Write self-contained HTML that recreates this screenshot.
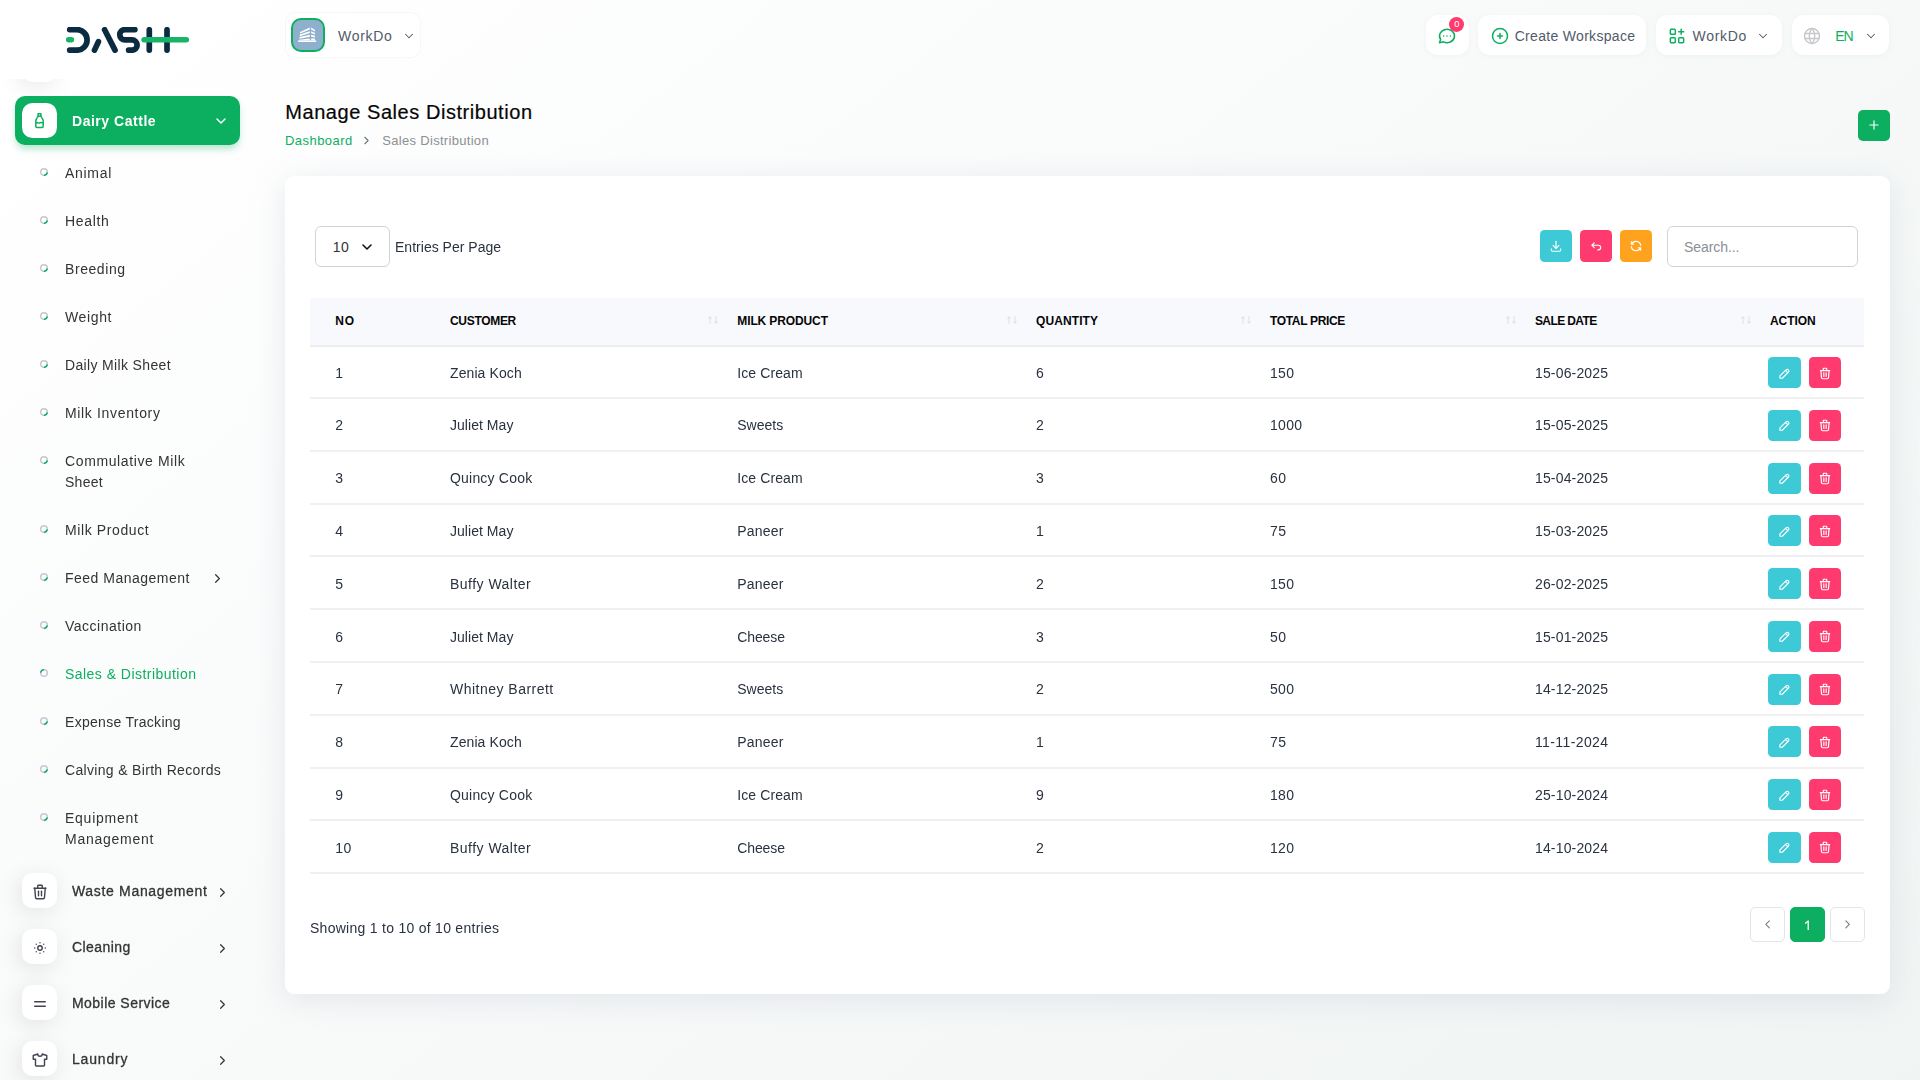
<!DOCTYPE html>
<html lang="en">
<head>
<meta charset="utf-8">
<title>Manage Sales Distribution</title>
<style>
*{box-sizing:border-box;margin:0;padding:0}
html,body{width:1920px;height:1080px;overflow:hidden}
body{font-family:"Liberation Sans",sans-serif;font-size:14px;color:#293240;
background:linear-gradient(141.55deg,rgba(240,244,243,0) 3.46%,#f0f4f3 99.86%),#fff;position:relative}
#side{position:absolute;left:0;top:0;width:280px;height:1080px;will-change:transform}
svg{display:block}
span{white-space:nowrap}
/* sidebar */
.logo{position:absolute;left:66px;top:27px;width:124px;height:26px}
.ghost{position:absolute;left:22px;top:47px;width:35px;height:35px;border-radius:10.5px;background:#fff;box-shadow:-3px 4px 23px rgba(0,0,0,.1);clip-path:inset(32px -60px -60px -60px)}
.act{position:absolute;left:15px;top:96px;width:225px;height:49px;border-radius:10px;background:#0caf60;box-shadow:0 5px 7px -1px rgba(12,175,96,.3)}
.act .ib{position:absolute;left:7px;top:7px;width:35px;height:35px;border-radius:10.5px;background:#fff}
.act .t{position:absolute;left:57px;top:14.8px;line-height:21px;font-size:14px;font-weight:700;color:#fff}
.sub{position:absolute;left:0;top:149.6px;width:280px;list-style:none}
.sub li{position:relative;padding:13.5px 0 13.5px 65px;line-height:21px;font-size:14px;color:#333}
.sub li .b{position:absolute;left:39.1px;top:17.4px;width:10px;height:10px}
.sub li.on{color:#0caf60}
.sub li .chev{position:absolute;left:209.5px;top:16.2px}
.main{position:absolute;left:0;top:862px;width:280px;list-style:none}
.main li{position:relative;height:56px}
.main li .ib{position:absolute;left:22px;top:11px;width:35px;height:35px;border-radius:10.5px;background:#fff;box-shadow:-3px 4px 23px rgba(0,0,0,.1)}
.main li .ib svg{position:absolute;left:8.6px;top:10.1px}
.main li .t{position:absolute;left:72px;top:19px;line-height:21px;font-size:14px;color:#333;-webkit-text-stroke:.3px #333}
.main li .chev{position:absolute;left:214.5px;top:22.8px}
/* header */
.pill{position:absolute;top:15px;height:40px;border-radius:12px;background:#fff;box-shadow:0 1px 5px rgba(200,205,210,.18)}
.pill .t{position:absolute;top:11.1px;line-height:21px;font-size:14px;color:#525b69}
.ws{position:absolute;left:285px;top:12px;width:136px;height:45.5px;border-radius:10px;background:rgba(255,255,255,.9);border:1px solid rgba(226,229,233,.3)}
.ws .av{position:absolute;left:5px;top:4.9px;width:34px;height:34px;border-radius:10px;border:2px solid #0caf60;background:#8fb0cd;overflow:hidden}
.ws .av svg{position:absolute;left:-2px;top:-2px}
.ws .t{position:absolute;left:52px;top:13.3px;line-height:21px;font-size:14px;color:#525b69}
.badge{position:absolute;left:23.4px;top:2px;width:14.8px;height:14.8px;border-radius:50%;background:#ff3a6e;color:#fff;font-size:9.3px;line-height:14.8px;text-align:center}
/* page head */
h1{position:absolute;left:285.3px;top:97.4px;font-size:20px;line-height:30px;font-weight:400;color:#060606;white-space:nowrap;-webkit-text-stroke:.2px #060606}
.bc{position:absolute;left:285px;top:131px;line-height:20px;font-size:13px;white-space:nowrap}
.bc .a{color:#0caf60}
.bc .c{color:#8c8f94}
.add{position:absolute;left:1858px;top:110px;width:32px;height:31px;border-radius:5px;background:#0caf60}
/* card */
.card{position:absolute;left:285px;top:176px;width:1605px;height:817.8px;border-radius:9px;background:#fff;box-shadow:0 6px 30px rgba(182,186,203,.3)}
.sel{position:absolute;left:30.3px;top:50.3px;width:74.4px;height:40.4px;border:1px solid #ced4da;border-radius:6px;background:#fff}
.sel .t{position:absolute;left:16.5px;top:9.4px;line-height:21px;font-size:14px;color:#333}
.epp{position:absolute;left:110px;top:60.7px;line-height:21px;font-size:14px;color:#293240}
.tb{position:absolute;top:54px;width:32px;height:32px;border-radius:4.5px}
.search{position:absolute;left:1382px;top:50.3px;width:191px;height:40.4px;border:1px solid #ced4da;border-radius:6px;background:#fff}
.search .t{position:absolute;left:16px;top:9.9px;line-height:21px;font-size:14px;color:#8a8f96}
table{position:absolute;left:25.3px;top:122px;width:1554.2px;border-collapse:separate;border-spacing:0;table-layout:fixed}
th{height:49px;background:#f8f9fd;border-bottom:2px solid #edeeef;text-align:left;padding:0 0 2px 12px;font-size:12px;font-weight:700;color:#060606;position:relative;white-space:nowrap;vertical-align:middle}
td{height:52.775px;border-bottom:2px solid #f0f0f0;padding:1.8px 0 0 12px;font-size:14px;color:#293240;vertical-align:middle;white-space:nowrap}
th:first-child,td:first-child{padding-left:25px}
tbody tr:first-child td{height:52.175px}
th .so{position:absolute;right:6.9px;top:18.4px}
td.ac{font-size:0;padding-top:10.6px;vertical-align:top}
tbody tr:first-child td.ac{padding-top:10px}
.ab{display:inline-block;vertical-align:top;width:33px;height:31px;border-radius:4.5px;position:relative}
.ab.e{background:#3ec9d6;margin-left:-2px}
.ab.d{background:#ff3a6e;margin-left:8.2px;width:31.6px}
.ab svg{position:absolute;left:50%;top:50%;transform:translate(-50%,calc(-50% + .5px))}
.ab.e svg{transform:translate(calc(-50% + .6px),calc(-50% + .6px))}
.info{position:absolute;left:25px;top:741.8px;line-height:21px;font-size:14px;color:#293240}
.pg{position:absolute;top:731px;width:34.8px;height:34.8px;border-radius:5px;border:1px solid #e4e5e8;background:#fff}
.pg.on{background:#0caf60;border-color:#0caf60;color:#fff;font-size:14px;line-height:33px;text-align:center}
.pg svg{position:absolute;left:50%;top:50%;transform:translate(calc(-50% + .6px),calc(-50% + .4px))}
</style>
</head>
<body>
<div id="side">
<svg class="logo" viewBox="66 27 124 26" fill="none" stroke-linecap="round" stroke-linejoin="round">
<g stroke="#0b2b40" stroke-width="5.7">
<path d="M69.7 29.6H76.8A10.3 10.3 0 0 1 76.8 50.2H69.7"/>
<path d="M94.5 50.1L98.4 41.7"/>
<path d="M104.6 29.7L115 50.1"/>
<path d="M134.9 29.6H124.9A5.15 5.15 0 0 0 124.9 39.9H132A5.15 5.15 0 0 1 132 50.2H128.6"/>
<path d="M149.3 29.7V50.1"/>
<path d="M167 29.7V50.1"/>
</g>
<g stroke="#17b366" stroke-width="5.5">
<path d="M68.6 39.7H71.4"/>
<path d="M144.1 39.7H186.3"/>
</g>
</svg>
<div class="ghost"></div>
<div class="act"><span class="ib"><svg style="position:absolute;left:8.6px;top:9.3px" width="17" height="17" viewBox="0 0 24 24" fill="none" stroke="#0caf60" stroke-width="2.1" stroke-linecap="round" stroke-linejoin="round"><path d="M10 2.5h4v3.5h-4z"/><path d="M10 6l-3.2 5.5v9a1.5 1.5 0 0 0 1.5 1.5h7.4a1.5 1.5 0 0 0 1.5 -1.5v-9l-3.2 -5.5"/><path d="M7 15.5c2 -2.5 3.5 1.5 5 0s3 -1 5 0"/></svg></span><span class="t" style="letter-spacing:0.527px;">Dairy Cattle</span><svg width="16" height="16" viewBox="0 0 24 24" fill="none" stroke="#fff" stroke-width="2.2" stroke-linecap="round" stroke-linejoin="round" style="position:absolute;top:16.5px;left:197.5px"><path d="M6 9l6 6l6 -6"/></svg></div>
<ul class="sub">
<li><svg class="b" viewBox="0 0 10 10"><circle cx="5" cy="5" r="3.3" fill="none" stroke="#c9c7d6" stroke-width="1.5"/><path d="M8.1 6.1A3.3 3.3 0 0 1 5.6 8.25" fill="none" stroke="#0caf60" stroke-width="1.6" stroke-linecap="round"/></svg><span style="letter-spacing:0.691px;">Animal</span></li>
<li><svg class="b" viewBox="0 0 10 10"><circle cx="5" cy="5" r="3.3" fill="none" stroke="#c9c7d6" stroke-width="1.5"/><path d="M8.1 6.1A3.3 3.3 0 0 1 5.6 8.25" fill="none" stroke="#0caf60" stroke-width="1.6" stroke-linecap="round"/></svg><span style="letter-spacing:0.688px;">Health</span></li>
<li><svg class="b" viewBox="0 0 10 10"><circle cx="5" cy="5" r="3.3" fill="none" stroke="#c9c7d6" stroke-width="1.5"/><path d="M8.1 6.1A3.3 3.3 0 0 1 5.6 8.25" fill="none" stroke="#0caf60" stroke-width="1.6" stroke-linecap="round"/></svg><span style="letter-spacing:0.573px;">Breeding</span></li>
<li><svg class="b" viewBox="0 0 10 10"><circle cx="5" cy="5" r="3.3" fill="none" stroke="#c9c7d6" stroke-width="1.5"/><path d="M8.1 6.1A3.3 3.3 0 0 1 5.6 8.25" fill="none" stroke="#0caf60" stroke-width="1.6" stroke-linecap="round"/></svg><span style="letter-spacing:0.631px;">Weight</span></li>
<li><svg class="b" viewBox="0 0 10 10"><circle cx="5" cy="5" r="3.3" fill="none" stroke="#c9c7d6" stroke-width="1.5"/><path d="M8.1 6.1A3.3 3.3 0 0 1 5.6 8.25" fill="none" stroke="#0caf60" stroke-width="1.6" stroke-linecap="round"/></svg><span style="letter-spacing:0.346px;">Daily Milk Sheet</span></li>
<li><svg class="b" viewBox="0 0 10 10"><circle cx="5" cy="5" r="3.3" fill="none" stroke="#c9c7d6" stroke-width="1.5"/><path d="M8.1 6.1A3.3 3.3 0 0 1 5.6 8.25" fill="none" stroke="#0caf60" stroke-width="1.6" stroke-linecap="round"/></svg><span style="letter-spacing:0.656px;">Milk Inventory</span></li>
<li><svg class="b" viewBox="0 0 10 10"><circle cx="5" cy="5" r="3.3" fill="none" stroke="#c9c7d6" stroke-width="1.5"/><path d="M8.1 6.1A3.3 3.3 0 0 1 5.6 8.25" fill="none" stroke="#0caf60" stroke-width="1.6" stroke-linecap="round"/></svg><span style="letter-spacing:0.62px;">Commulative Milk</span><br><span style="letter-spacing:0.27px;">Sheet</span></li>
<li><svg class="b" viewBox="0 0 10 10"><circle cx="5" cy="5" r="3.3" fill="none" stroke="#c9c7d6" stroke-width="1.5"/><path d="M8.1 6.1A3.3 3.3 0 0 1 5.6 8.25" fill="none" stroke="#0caf60" stroke-width="1.6" stroke-linecap="round"/></svg><span style="letter-spacing:0.61px;">Milk Product</span></li>
<li><svg class="b" viewBox="0 0 10 10"><circle cx="5" cy="5" r="3.3" fill="none" stroke="#c9c7d6" stroke-width="1.5"/><path d="M8.1 6.1A3.3 3.3 0 0 1 5.6 8.25" fill="none" stroke="#0caf60" stroke-width="1.6" stroke-linecap="round"/></svg><span style="letter-spacing:0.487px;">Feed Management</span><svg class="chev" width="15" height="15" viewBox="0 0 24 24" fill="none" stroke="#333" stroke-width="1.9" stroke-linecap="round" stroke-linejoin="round" style=""><path d="M9 6l6 6l-6 6"/></svg></li>
<li><svg class="b" viewBox="0 0 10 10"><circle cx="5" cy="5" r="3.3" fill="none" stroke="#c9c7d6" stroke-width="1.5"/><path d="M8.1 6.1A3.3 3.3 0 0 1 5.6 8.25" fill="none" stroke="#0caf60" stroke-width="1.6" stroke-linecap="round"/></svg><span style="letter-spacing:0.506px;">Vaccination</span></li>
<li class="on"><svg class="b" viewBox="0 0 10 10"><circle cx="5" cy="5" r="3.3" fill="none" stroke="#c9c7d6" stroke-width="1.5"/><path d="M1.9 3.9A3.3 3.3 0 0 1 4.4 1.75" fill="none" stroke="#0caf60" stroke-width="1.6" stroke-linecap="round"/></svg><span style="letter-spacing:0.461px;">Sales &amp; Distribution</span></li>
<li><svg class="b" viewBox="0 0 10 10"><circle cx="5" cy="5" r="3.3" fill="none" stroke="#c9c7d6" stroke-width="1.5"/><path d="M8.1 6.1A3.3 3.3 0 0 1 5.6 8.25" fill="none" stroke="#0caf60" stroke-width="1.6" stroke-linecap="round"/></svg><span style="letter-spacing:0.291px;">Expense Tracking</span></li>
<li><svg class="b" viewBox="0 0 10 10"><circle cx="5" cy="5" r="3.3" fill="none" stroke="#c9c7d6" stroke-width="1.5"/><path d="M8.1 6.1A3.3 3.3 0 0 1 5.6 8.25" fill="none" stroke="#0caf60" stroke-width="1.6" stroke-linecap="round"/></svg><span style="letter-spacing:0.324px;">Calving &amp; Birth Records</span></li>
<li><svg class="b" viewBox="0 0 10 10"><circle cx="5" cy="5" r="3.3" fill="none" stroke="#c9c7d6" stroke-width="1.5"/><path d="M8.1 6.1A3.3 3.3 0 0 1 5.6 8.25" fill="none" stroke="#0caf60" stroke-width="1.6" stroke-linecap="round"/></svg><span style="letter-spacing:0.749px;">Equipment</span><br><span style="letter-spacing:0.751px;">Management</span></li>
</ul>
<ul class="main">
<li><span class="ib"><svg width="18" height="18" viewBox="0 0 24 24" fill="none" stroke="#40454f" stroke-width="1.9" stroke-linecap="round" stroke-linejoin="round" style=""><path d="M4 7h16"/><path d="M10 11v6"/><path d="M14 11v6"/><path d="M5 7l1 12a2 2 0 0 0 2 2h8a2 2 0 0 0 2 -2l1 -12"/><path d="M9 7v-3a1 1 0 0 1 1 -1h4a1 1 0 0 1 1 1v3"/></svg></span><span class="t" style="letter-spacing:0.677px;">Waste Management</span><svg class="chev" width="15" height="15" viewBox="0 0 24 24" fill="none" stroke="#333" stroke-width="1.9" stroke-linecap="round" stroke-linejoin="round" style=""><path d="M9 6l6 6l-6 6"/></svg></li>
<li><span class="ib"><svg width="18" height="18" viewBox="0 0 24 24" fill="none" stroke="#40454f" stroke-width="1.9" stroke-linecap="round" stroke-linejoin="round" style=""><circle cx="12" cy="12" r="3"/><path d="M12 5v.01M17 7v.01M19 12v.01M17 17v.01M12 19v.01M7 17v.01M5 12v.01M7 7v.01"/></svg></span><span class="t" style="letter-spacing:0.43px;">Cleaning</span><svg class="chev" width="15" height="15" viewBox="0 0 24 24" fill="none" stroke="#333" stroke-width="1.9" stroke-linecap="round" stroke-linejoin="round" style=""><path d="M9 6l6 6l-6 6"/></svg></li>
<li><span class="ib"><svg width="18" height="18" viewBox="0 0 24 24" fill="none" stroke="#40454f" stroke-width="1.9" stroke-linecap="round" stroke-linejoin="round" style=""><path d="M5 9h14"/><path d="M5 15h14"/></svg></span><span class="t" style="letter-spacing:0.461px;">Mobile Service</span><svg class="chev" width="15" height="15" viewBox="0 0 24 24" fill="none" stroke="#333" stroke-width="1.9" stroke-linecap="round" stroke-linejoin="round" style=""><path d="M9 6l6 6l-6 6"/></svg></li>
<li><span class="ib"><svg width="18" height="18" viewBox="0 0 24 24" fill="none" stroke="#40454f" stroke-width="1.9" stroke-linecap="round" stroke-linejoin="round" style=""><path d="M15 4l6 2v5h-3v8a1 1 0 0 1 -1 1h-10a1 1 0 0 1 -1 -1v-8h-3v-5l6 -2a3 3 0 0 0 6 0"/></svg></span><span class="t" style="letter-spacing:0.808px;">Laundry</span><svg class="chev" width="15" height="15" viewBox="0 0 24 24" fill="none" stroke="#333" stroke-width="1.9" stroke-linecap="round" stroke-linejoin="round" style=""><path d="M9 6l6 6l-6 6"/></svg></li>
</ul>
</div>
<div class="ws"><span class="av"><svg viewBox="0 0 34 34" width="34" height="34"><g fill="#fff"><path d="M9 13.9L18.8 9.5V11.4L9 15.6z"/><path d="M8.8 16.5L18.8 13.2V15.1L8.8 18.2z"/><path d="M8.5 19.1L18.8 16.8V18.7L8.5 20.8z"/><path d="M8.3 21.7L18.8 20.4V22.6H8.3z"/><path d="M20.1 9.5L24 12V13.6L20.1 11.4z"/><path d="M20.1 13.2L24 14.9V16.5L20.1 15.1z"/><path d="M20.1 16.8L24 17.8V19.4L20.1 18.7z"/><path d="M20.1 20.4L24 20.6V22.6H20.1z"/><path d="M7.1 22.4H25.2V24H7.1z"/></g></svg></span><span class="t" style="letter-spacing:0.695px;">WorkDo</span><svg width="14" height="14" viewBox="0 0 24 24" fill="none" stroke="#525b69" stroke-width="1.8" stroke-linecap="round" stroke-linejoin="round" style="position:absolute;left:115.85px;top:15.5px"><path d="M6 9l6 6l6 -6"/></svg></div>
<div class="pill" style="left:1426px;width:42.5px"><svg width="20" height="20" viewBox="0 0 24 24" fill="none" stroke="#0caf60" stroke-width="1.8" stroke-linecap="round" stroke-linejoin="round" style="position:absolute;left:11.25px;top:11.2px"><path d="M3 20l1.3 -3.9a9 8 0 1 1 3.4 2.9l-4.7 1"/><path d="M8 12v.01M12 12v.01M16 12v.01"/></svg><span class="badge">0</span></div>
<div class="pill" style="left:1478px;width:168px"><svg width="20" height="20" viewBox="0 0 24 24" fill="none" stroke="#0caf60" stroke-width="1.8" stroke-linecap="round" stroke-linejoin="round" style="position:absolute;left:11.5px;top:11px"><circle cx="12" cy="12" r="9"/><path d="M9 12h6M12 9v6"/></svg><span class="t" style="letter-spacing:0.31px;left:36.7px">Create Workspace</span></div>
<div class="pill" style="left:1656px;width:125.5px"><svg width="20" height="20" viewBox="0 0 24 24" fill="none" stroke="#0caf60" stroke-width="1.8" stroke-linecap="round" stroke-linejoin="round" style="position:absolute;left:11.2px;top:11px"><rect x="4" y="4" width="6" height="6" rx="1"/><rect x="4" y="14" width="6" height="6" rx="1"/><rect x="14" y="14" width="6" height="6" rx="1"/><path d="M14 7h6M17 4v6"/></svg><span class="t" style="letter-spacing:0.695px;left:36.5px">WorkDo</span><svg width="14" height="14" viewBox="0 0 24 24" fill="none" stroke="#525b69" stroke-width="1.8" stroke-linecap="round" stroke-linejoin="round" style="position:absolute;left:100px;top:13.5px"><path d="M6 9l6 6l6 -6"/></svg></div>
<div class="pill" style="left:1791.5px;width:97.5px"><svg width="20" height="20" viewBox="0 0 24 24" fill="none" stroke="#c6c8cc" stroke-width="1.7" stroke-linecap="round" stroke-linejoin="round" style="position:absolute;left:10.7px;top:10.75px"><circle cx="12" cy="12" r="9"/><path d="M3.6 9h16.8M3.6 15h16.8M11.5 3a17 17 0 0 0 0 18M12.5 3a17 17 0 0 1 0 18"/></svg><span class="t" style="letter-spacing:-1.107px;left:43.8px;color:#0caf60">EN</span><svg width="14" height="14" viewBox="0 0 24 24" fill="none" stroke="#525b69" stroke-width="1.8" stroke-linecap="round" stroke-linejoin="round" style="position:absolute;left:72.35px;top:13.5px"><path d="M6 9l6 6l6 -6"/></svg></div>
<h1><span style="letter-spacing:0.552px;">Manage Sales Distribution</span></h1>
<div class="bc"><span class="a" style="letter-spacing:0.451px;">Dashboard</span><svg width="13" height="13" viewBox="0 0 24 24" fill="none" stroke="#6c757d" stroke-width="2" stroke-linecap="round" stroke-linejoin="round" style="position:absolute;left:75.3px;top:2.5px"><path d="M9 6l6 6l-6 6"/></svg><span class="c" style="letter-spacing:0.304px;position:absolute;left:97.3px">Sales Distribution</span></div>
<div class="add"><svg width="14" height="14" viewBox="0 0 24 24" fill="none" stroke="#fff" stroke-width="2" stroke-linecap="round" stroke-linejoin="round" style="position:absolute;left:9px;top:7.8px"><path d="M12 5v14M5 12h14"/></svg></div>
<div class="card">
<div class="sel"><span class="t" style="letter-spacing:0.438px;">10</span><svg width="16" height="16" viewBox="0 0 24 24" fill="none" stroke="#111" stroke-width="2.4" stroke-linecap="round" stroke-linejoin="round" style="position:absolute;left:43.2px;top:11.4px"><path d="M6 9l6 6l6 -6"/></svg></div>
<div class="epp"><span style="letter-spacing:0.019px;">Entries Per Page</span></div>
<div class="tb" style="left:1255px;background:#3ec9d6"><svg width="14" height="14" viewBox="0 0 24 24" fill="none" stroke="#fff" stroke-width="2" stroke-linecap="round" stroke-linejoin="round" style="position:absolute;left:8.8px;top:9.3px"><path d="M4 17v2a2 2 0 0 0 2 2h12a2 2 0 0 0 2 -2v-2"/><path d="M7 11l5 5l5 -5"/><path d="M12 4v12"/></svg></div>
<div class="tb" style="left:1295px;background:#ff3a6e"><svg width="14" height="14" viewBox="0 0 24 24" fill="none" stroke="#fff" stroke-width="2" stroke-linecap="round" stroke-linejoin="round" style="position:absolute;left:9.1px;top:9.5px"><path d="M9 13l-4 -4l4 -4m-4 4h11a4 4 0 0 1 0 8h-1"/></svg></div>
<div class="tb" style="left:1335px;background:#ffa21d"><svg width="14" height="14" viewBox="0 0 24 24" fill="none" stroke="#fff" stroke-width="2" stroke-linecap="round" stroke-linejoin="round" style="position:absolute;left:8.7px;top:9.25px"><path d="M20 11a8.1 8.1 0 0 0 -15.5 -2m-.5 -4v4h4"/><path d="M4 13a8.1 8.1 0 0 0 15.5 2m.5 4v-4h-4"/></svg></div>
<div class="search"><span class="t" style="letter-spacing:-0.069px;">Search...</span></div>
<table>
<colgroup><col style="width:127.7px"><col style="width:287.3px"><col style="width:298.7px"><col style="width:234px"><col style="width:265px"><col style="width:235px"><col style="width:106.5px"></colgroup>
<thead><tr><th><span style="letter-spacing:0.7px;">NO</span></th><th><span style="letter-spacing:-0.307px;">CUSTOMER</span><svg class="so" width="10" height="8" viewBox="0 0 10 8" fill="none" stroke="#dcdfe4" stroke-width="1" stroke-linecap="round" stroke-linejoin="round"><path d="M2 7.5V1M.6 2.4L2 .8l1.4 1.6M8 .5V7M6.6 5.6L8 7.2l1.4-1.6"/></svg></th><th><span style="letter-spacing:-0.117px;">MILK PRODUCT</span><svg class="so" width="10" height="8" viewBox="0 0 10 8" fill="none" stroke="#dcdfe4" stroke-width="1" stroke-linecap="round" stroke-linejoin="round"><path d="M2 7.5V1M.6 2.4L2 .8l1.4 1.6M8 .5V7M6.6 5.6L8 7.2l1.4-1.6"/></svg></th><th><span style="letter-spacing:0.11px;">QUANTITY</span><svg class="so" width="10" height="8" viewBox="0 0 10 8" fill="none" stroke="#dcdfe4" stroke-width="1" stroke-linecap="round" stroke-linejoin="round"><path d="M2 7.5V1M.6 2.4L2 .8l1.4 1.6M8 .5V7M6.6 5.6L8 7.2l1.4-1.6"/></svg></th><th><span style="letter-spacing:-0.327px;">TOTAL PRICE</span><svg class="so" width="10" height="8" viewBox="0 0 10 8" fill="none" stroke="#dcdfe4" stroke-width="1" stroke-linecap="round" stroke-linejoin="round"><path d="M2 7.5V1M.6 2.4L2 .8l1.4 1.6M8 .5V7M6.6 5.6L8 7.2l1.4-1.6"/></svg></th><th><span style="letter-spacing:-0.614px;">SALE DATE</span><svg class="so" width="10" height="8" viewBox="0 0 10 8" fill="none" stroke="#dcdfe4" stroke-width="1" stroke-linecap="round" stroke-linejoin="round"><path d="M2 7.5V1M.6 2.4L2 .8l1.4 1.6M8 .5V7M6.6 5.6L8 7.2l1.4-1.6"/></svg></th><th><span style="letter-spacing:-0.039px;">ACTION</span></th></tr></thead>
<tbody>
<tr><td><span style="letter-spacing:0px;">1</span></td><td><span style="letter-spacing:0.099px;">Zenia Koch</span></td><td><span style="letter-spacing:0.087px;">Ice Cream</span></td><td><span style="letter-spacing:0px;">6</span></td><td><span style="letter-spacing:0.328px;">150</span></td><td><span style="letter-spacing:0.16px;">15-06-2025</span></td><td class="ac"><span class="ab e"><svg width="14" height="14" viewBox="0 0 24 24" fill="none" stroke="#fff" stroke-width="2" stroke-linecap="round" stroke-linejoin="round" style=""><path d="M4 20h4l10.5 -10.5a2.828 2.828 0 1 0 -4 -4l-10.5 10.5v4"/><path d="M13.5 6.5l4 4"/></svg></span><span class="ab d"><svg width="14" height="14" viewBox="0 0 24 24" fill="none" stroke="#fff" stroke-width="2" stroke-linecap="round" stroke-linejoin="round" style=""><path d="M4 7h16"/><path d="M10 11v6"/><path d="M14 11v6"/><path d="M5 7l1 12a2 2 0 0 0 2 2h8a2 2 0 0 0 2 -2l1 -12"/><path d="M9 7v-3a1 1 0 0 1 1 -1h4a1 1 0 0 1 1 1v3"/></svg></span></td></tr>
<tr><td><span style="letter-spacing:0px;">2</span></td><td><span style="letter-spacing:0.043px;">Juliet May</span></td><td><span style="letter-spacing:-0.001px;">Sweets</span></td><td><span style="letter-spacing:0px;">2</span></td><td><span style="letter-spacing:0.292px;">1000</span></td><td><span style="letter-spacing:0.16px;">15-05-2025</span></td><td class="ac"><span class="ab e"><svg width="14" height="14" viewBox="0 0 24 24" fill="none" stroke="#fff" stroke-width="2" stroke-linecap="round" stroke-linejoin="round" style=""><path d="M4 20h4l10.5 -10.5a2.828 2.828 0 1 0 -4 -4l-10.5 10.5v4"/><path d="M13.5 6.5l4 4"/></svg></span><span class="ab d"><svg width="14" height="14" viewBox="0 0 24 24" fill="none" stroke="#fff" stroke-width="2" stroke-linecap="round" stroke-linejoin="round" style=""><path d="M4 7h16"/><path d="M10 11v6"/><path d="M14 11v6"/><path d="M5 7l1 12a2 2 0 0 0 2 2h8a2 2 0 0 0 2 -2l1 -12"/><path d="M9 7v-3a1 1 0 0 1 1 -1h4a1 1 0 0 1 1 1v3"/></svg></span></td></tr>
<tr><td><span style="letter-spacing:0px;">3</span></td><td><span style="letter-spacing:0.202px;">Quincy Cook</span></td><td><span style="letter-spacing:0.087px;">Ice Cream</span></td><td><span style="letter-spacing:0px;">3</span></td><td><span style="letter-spacing:0.438px;">60</span></td><td><span style="letter-spacing:0.16px;">15-04-2025</span></td><td class="ac"><span class="ab e"><svg width="14" height="14" viewBox="0 0 24 24" fill="none" stroke="#fff" stroke-width="2" stroke-linecap="round" stroke-linejoin="round" style=""><path d="M4 20h4l10.5 -10.5a2.828 2.828 0 1 0 -4 -4l-10.5 10.5v4"/><path d="M13.5 6.5l4 4"/></svg></span><span class="ab d"><svg width="14" height="14" viewBox="0 0 24 24" fill="none" stroke="#fff" stroke-width="2" stroke-linecap="round" stroke-linejoin="round" style=""><path d="M4 7h16"/><path d="M10 11v6"/><path d="M14 11v6"/><path d="M5 7l1 12a2 2 0 0 0 2 2h8a2 2 0 0 0 2 -2l1 -12"/><path d="M9 7v-3a1 1 0 0 1 1 -1h4a1 1 0 0 1 1 1v3"/></svg></span></td></tr>
<tr><td><span style="letter-spacing:0px;">4</span></td><td><span style="letter-spacing:0.043px;">Juliet May</span></td><td><span style="letter-spacing:0.217px;">Paneer</span></td><td><span style="letter-spacing:0px;">1</span></td><td><span style="letter-spacing:0.438px;">75</span></td><td><span style="letter-spacing:0.16px;">15-03-2025</span></td><td class="ac"><span class="ab e"><svg width="14" height="14" viewBox="0 0 24 24" fill="none" stroke="#fff" stroke-width="2" stroke-linecap="round" stroke-linejoin="round" style=""><path d="M4 20h4l10.5 -10.5a2.828 2.828 0 1 0 -4 -4l-10.5 10.5v4"/><path d="M13.5 6.5l4 4"/></svg></span><span class="ab d"><svg width="14" height="14" viewBox="0 0 24 24" fill="none" stroke="#fff" stroke-width="2" stroke-linecap="round" stroke-linejoin="round" style=""><path d="M4 7h16"/><path d="M10 11v6"/><path d="M14 11v6"/><path d="M5 7l1 12a2 2 0 0 0 2 2h8a2 2 0 0 0 2 -2l1 -12"/><path d="M9 7v-3a1 1 0 0 1 1 -1h4a1 1 0 0 1 1 1v3"/></svg></span></td></tr>
<tr><td><span style="letter-spacing:0px;">5</span></td><td><span style="letter-spacing:0.478px;">Buffy Walter</span></td><td><span style="letter-spacing:0.217px;">Paneer</span></td><td><span style="letter-spacing:0px;">2</span></td><td><span style="letter-spacing:0.328px;">150</span></td><td><span style="letter-spacing:0.16px;">26-02-2025</span></td><td class="ac"><span class="ab e"><svg width="14" height="14" viewBox="0 0 24 24" fill="none" stroke="#fff" stroke-width="2" stroke-linecap="round" stroke-linejoin="round" style=""><path d="M4 20h4l10.5 -10.5a2.828 2.828 0 1 0 -4 -4l-10.5 10.5v4"/><path d="M13.5 6.5l4 4"/></svg></span><span class="ab d"><svg width="14" height="14" viewBox="0 0 24 24" fill="none" stroke="#fff" stroke-width="2" stroke-linecap="round" stroke-linejoin="round" style=""><path d="M4 7h16"/><path d="M10 11v6"/><path d="M14 11v6"/><path d="M5 7l1 12a2 2 0 0 0 2 2h8a2 2 0 0 0 2 -2l1 -12"/><path d="M9 7v-3a1 1 0 0 1 1 -1h4a1 1 0 0 1 1 1v3"/></svg></span></td></tr>
<tr><td><span style="letter-spacing:0px;">6</span></td><td><span style="letter-spacing:0.043px;">Juliet May</span></td><td><span style="letter-spacing:-0.118px;">Cheese</span></td><td><span style="letter-spacing:0px;">3</span></td><td><span style="letter-spacing:0.438px;">50</span></td><td><span style="letter-spacing:0.16px;">15-01-2025</span></td><td class="ac"><span class="ab e"><svg width="14" height="14" viewBox="0 0 24 24" fill="none" stroke="#fff" stroke-width="2" stroke-linecap="round" stroke-linejoin="round" style=""><path d="M4 20h4l10.5 -10.5a2.828 2.828 0 1 0 -4 -4l-10.5 10.5v4"/><path d="M13.5 6.5l4 4"/></svg></span><span class="ab d"><svg width="14" height="14" viewBox="0 0 24 24" fill="none" stroke="#fff" stroke-width="2" stroke-linecap="round" stroke-linejoin="round" style=""><path d="M4 7h16"/><path d="M10 11v6"/><path d="M14 11v6"/><path d="M5 7l1 12a2 2 0 0 0 2 2h8a2 2 0 0 0 2 -2l1 -12"/><path d="M9 7v-3a1 1 0 0 1 1 -1h4a1 1 0 0 1 1 1v3"/></svg></span></td></tr>
<tr><td><span style="letter-spacing:0px;">7</span></td><td><span style="letter-spacing:0.486px;">Whitney Barrett</span></td><td><span style="letter-spacing:-0.001px;">Sweets</span></td><td><span style="letter-spacing:0px;">2</span></td><td><span style="letter-spacing:0.328px;">500</span></td><td><span style="letter-spacing:0.16px;">14-12-2025</span></td><td class="ac"><span class="ab e"><svg width="14" height="14" viewBox="0 0 24 24" fill="none" stroke="#fff" stroke-width="2" stroke-linecap="round" stroke-linejoin="round" style=""><path d="M4 20h4l10.5 -10.5a2.828 2.828 0 1 0 -4 -4l-10.5 10.5v4"/><path d="M13.5 6.5l4 4"/></svg></span><span class="ab d"><svg width="14" height="14" viewBox="0 0 24 24" fill="none" stroke="#fff" stroke-width="2" stroke-linecap="round" stroke-linejoin="round" style=""><path d="M4 7h16"/><path d="M10 11v6"/><path d="M14 11v6"/><path d="M5 7l1 12a2 2 0 0 0 2 2h8a2 2 0 0 0 2 -2l1 -12"/><path d="M9 7v-3a1 1 0 0 1 1 -1h4a1 1 0 0 1 1 1v3"/></svg></span></td></tr>
<tr><td><span style="letter-spacing:0px;">8</span></td><td><span style="letter-spacing:0.099px;">Zenia Koch</span></td><td><span style="letter-spacing:0.217px;">Paneer</span></td><td><span style="letter-spacing:0px;">1</span></td><td><span style="letter-spacing:0.438px;">75</span></td><td><span style="letter-spacing:0.39px;">11-11-2024</span></td><td class="ac"><span class="ab e"><svg width="14" height="14" viewBox="0 0 24 24" fill="none" stroke="#fff" stroke-width="2" stroke-linecap="round" stroke-linejoin="round" style=""><path d="M4 20h4l10.5 -10.5a2.828 2.828 0 1 0 -4 -4l-10.5 10.5v4"/><path d="M13.5 6.5l4 4"/></svg></span><span class="ab d"><svg width="14" height="14" viewBox="0 0 24 24" fill="none" stroke="#fff" stroke-width="2" stroke-linecap="round" stroke-linejoin="round" style=""><path d="M4 7h16"/><path d="M10 11v6"/><path d="M14 11v6"/><path d="M5 7l1 12a2 2 0 0 0 2 2h8a2 2 0 0 0 2 -2l1 -12"/><path d="M9 7v-3a1 1 0 0 1 1 -1h4a1 1 0 0 1 1 1v3"/></svg></span></td></tr>
<tr><td><span style="letter-spacing:0px;">9</span></td><td><span style="letter-spacing:0.202px;">Quincy Cook</span></td><td><span style="letter-spacing:0.087px;">Ice Cream</span></td><td><span style="letter-spacing:0px;">9</span></td><td><span style="letter-spacing:0.328px;">180</span></td><td><span style="letter-spacing:0.16px;">25-10-2024</span></td><td class="ac"><span class="ab e"><svg width="14" height="14" viewBox="0 0 24 24" fill="none" stroke="#fff" stroke-width="2" stroke-linecap="round" stroke-linejoin="round" style=""><path d="M4 20h4l10.5 -10.5a2.828 2.828 0 1 0 -4 -4l-10.5 10.5v4"/><path d="M13.5 6.5l4 4"/></svg></span><span class="ab d"><svg width="14" height="14" viewBox="0 0 24 24" fill="none" stroke="#fff" stroke-width="2" stroke-linecap="round" stroke-linejoin="round" style=""><path d="M4 7h16"/><path d="M10 11v6"/><path d="M14 11v6"/><path d="M5 7l1 12a2 2 0 0 0 2 2h8a2 2 0 0 0 2 -2l1 -12"/><path d="M9 7v-3a1 1 0 0 1 1 -1h4a1 1 0 0 1 1 1v3"/></svg></span></td></tr>
<tr><td><span style="letter-spacing:0.438px;">10</span></td><td><span style="letter-spacing:0.478px;">Buffy Walter</span></td><td><span style="letter-spacing:-0.118px;">Cheese</span></td><td><span style="letter-spacing:0px;">2</span></td><td><span style="letter-spacing:0.328px;">120</span></td><td><span style="letter-spacing:0.16px;">14-10-2024</span></td><td class="ac"><span class="ab e"><svg width="14" height="14" viewBox="0 0 24 24" fill="none" stroke="#fff" stroke-width="2" stroke-linecap="round" stroke-linejoin="round" style=""><path d="M4 20h4l10.5 -10.5a2.828 2.828 0 1 0 -4 -4l-10.5 10.5v4"/><path d="M13.5 6.5l4 4"/></svg></span><span class="ab d"><svg width="14" height="14" viewBox="0 0 24 24" fill="none" stroke="#fff" stroke-width="2" stroke-linecap="round" stroke-linejoin="round" style=""><path d="M4 7h16"/><path d="M10 11v6"/><path d="M14 11v6"/><path d="M5 7l1 12a2 2 0 0 0 2 2h8a2 2 0 0 0 2 -2l1 -12"/><path d="M9 7v-3a1 1 0 0 1 1 -1h4a1 1 0 0 1 1 1v3"/></svg></span></td></tr>
</tbody>
</table>
<div class="info"><span style="letter-spacing:0.275px;">Showing 1 to 10 of 10 entries</span></div>
<div class="pg" style="left:1465px"><svg width="14" height="14" viewBox="0 0 24 24" fill="none" stroke="#777b88" stroke-width="1.9" stroke-linecap="round" stroke-linejoin="round" style=""><path d="M15 6l-6 6l6 6"/></svg></div>
<div class="pg on" style="left:1505.2px"><svg width="6" height="10" viewBox="0 0 6 10" style="transform:translate(calc(-50% - 1.1px),calc(-50% + .9px))"><path d="M.9 3.1L3.9.5H5V10H3.65V2.3L1.6 4.1z" fill="#fff"/></svg></div>
<div class="pg" style="left:1545px"><svg width="14" height="14" viewBox="0 0 24 24" fill="none" stroke="#777b88" stroke-width="1.9" stroke-linecap="round" stroke-linejoin="round" style=""><path d="M9 6l6 6l-6 6"/></svg></div>
</div>
</body>
</html>
